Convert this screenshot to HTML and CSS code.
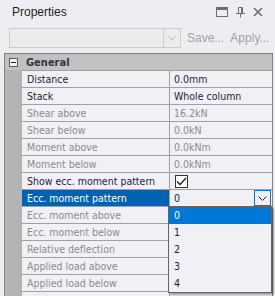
FILE: index.html
```html
<!DOCTYPE html>
<html lang="en">
<head>
    <meta charset="UTF-8">
    <title>Properties</title>
    <link rel="stylesheet" href="styles.css">
</head>
<body>
    <div class="panel">
        <div class="titlebar">
            <span class="title">Properties</span>
            <span class="tools">
                <svg width="12" height="10" viewBox="0 0 12 10"><rect x="0.5" y="0.5" width="11" height="9" fill="none" stroke="#6f6f6f"/><rect x="1" y="1" width="10" height="2" fill="#6f6f6f"/></svg>
                <svg width="9" height="11" viewBox="0 0 9 11"><path d="M2.5 0.5h4v6h-4z M4.5 6.5v4 M0 6.5h9" fill="none" stroke="#6f6f6f"/><rect x="5" y="1" width="1" height="5" fill="#6f6f6f"/></svg>
                <svg width="10" height="10" viewBox="0 0 10 10"><path d="M1 1L9 9M9 1L1 9" stroke="#6f6f6f" stroke-width="1.6"/></svg>
            </span>
        </div>
        <div class="toolbar">
            <div class="combo">
                <span class="combo-btn">
                    <svg width="8" height="5" viewBox="0 0 8 5"><path d="M0.5 0.5L4 4L7.5 0.5" fill="none" stroke="#b4b4b4"/></svg>
                </span>
            </div>
            <span class="link">Save...</span>
            <span class="link">Apply...</span>
        </div>

        <div class="grid">
            <div class="category">
                <span class="minus"></span>
                <span class="cat-name">General</span>
            </div>
            <div class="row"><span class="label">Distance</span><span class="value">0.0mm</span></div>
            <div class="row"><span class="label">Stack</span><span class="value">Whole column</span></div>
            <div class="row off"><span class="label">Shear above</span><span class="value">16.2kN</span></div>
            <div class="row off"><span class="label">Shear below</span><span class="value">0.0kN</span></div>
            <div class="row off"><span class="label">Moment above</span><span class="value">0.0kNm</span></div>
            <div class="row off"><span class="label">Moment below</span><span class="value">0.0kNm</span></div>
            <div class="row"><span class="label">Show ecc. moment pattern</span><span class="value"><span class="check"><svg width="11" height="9" viewBox="0 0 11 9"><path d="M1 4.5L4 7.5L10 1" fill="none" stroke="#1e1e1e" stroke-width="1.3"/></svg></span></span></div>
            <div class="row selected"><span class="label">Ecc. moment pattern</span><span class="value edit">0<span class="drop-btn"><svg width="9" height="5" viewBox="0 0 9 5"><path d="M0.5 0.5L4.5 4.5L8.5 0.5" fill="none" stroke="#1e1e1e"/></svg></span></span></div>
            <div class="row off"><span class="label">Ecc. moment above</span><span class="value"></span></div>
            <div class="row off"><span class="label">Ecc. moment below</span><span class="value"></span></div>
            <div class="row off"><span class="label">Relative deflection</span><span class="value"></span></div>
            <div class="row off"><span class="label">Applied load above</span><span class="value"></span></div>
            <div class="row off"><span class="label">Applied load below</span><span class="value"></span></div>
            <div class="row off"><span class="label"></span><span class="value"></span></div>

            <ul class="dropdown">
                <li class="active">0</li>
                <li>1</li>
                <li>2</li>
                <li>3</li>
                <li>4</li>
            </ul>
        </div>
    </div>
</body>
</html>
```

FILE: styles.css
```css
body { margin: 0; background-color: #eeeef2; font-family: "Liberation Sans", Arial, sans-serif; font-size: 12px; color: #1e1e1e; overflow: hidden; }
.panel { width: 275px; height: 296px; overflow: hidden; }

.titlebar { display: flex; align-items: center; justify-content: space-between; height: 24px; padding: 0 12px 0 12px; }
.title { font-size: 12px; color: #1e1e1e; }
.tools { display: flex; align-items: center; gap: 8px; }

.toolbar { display: flex; align-items: center; gap: 6px; padding: 4px 0 0 9px; height: 20px; }
.combo { width: 170px; height: 18px; border: 1px solid #cccccc; background-color: #ececec; display: flex; justify-content: flex-end; }
.combo-btn { width: 16px; border-left: 1px solid #cccccc; display: flex; align-items: center; justify-content: center; }
.link { color: #a2a2a2; font-size: 12px; }

.grid { position: relative; margin: 5px 2px 0 4px; border: 1px solid #828282; background-color: #b4b4b4; height: 300px; font-family: "DejaVu Sans Condensed", "DejaVu Sans", sans-serif; font-size: 10.5px; }
.category { display: flex; align-items: center; height: 16px; background-color: #c2c2c2; }
.minus { width: 7px; height: 7px; margin: 0 0 0 4px; border: 1px solid #5c5c5c; background-color: #f4f4f4; position: relative; }
.minus::after { content: ""; position: absolute; left: 1px; top: 3px; width: 5px; height: 1px; background-color: #1e1e1e; }
.cat-name { font-weight: bold; font-size: 11px; color: #333340; margin-left: 8px; }

.row { display: flex; height: 16px; margin-left: 17px; border-top: 1px solid #a0a0a0; background-color: #f0f0f5; }
.label { flex: 1; padding-left: 5px; line-height: 16px; white-space: nowrap; overflow: hidden; color: #1e1e3c; }
.value { width: 98px; padding-left: 4px; border-left: 1px solid #a0a0a0; line-height: 16px; position: relative; color: #1e1e3c; }
.off .label, .off .value { color: #8c8c8c; }
.selected .label { background-color: #0063b1; color: #ffffff; }
.check { position: absolute; left: 5px; top: 2px; width: 11px; height: 11px; border: 1px solid #333333; background-color: #ffffff; display: flex; align-items: center; justify-content: center; }
.edit { display: flex; align-items: center; justify-content: space-between; }
.drop-btn { width: 15px; height: 14px; border: 1px solid #0078d7; background-color: #f0f0f5; display: flex; align-items: center; justify-content: center; margin-right: 1px; }

.dropdown { position: absolute; left: 163px; top: 152px; width: 102px; margin: 0; padding: 0; list-style: none; border: 1px solid #646464; background-color: #f0f0f5; box-shadow: 2px 2px 2px rgba(0, 0, 0, 0.35); }
.dropdown li { height: 17px; line-height: 17px; padding-left: 5px; color: #1e1e3c; }
.dropdown .active { background-color: #0078d7; color: #ffffff; }
```
